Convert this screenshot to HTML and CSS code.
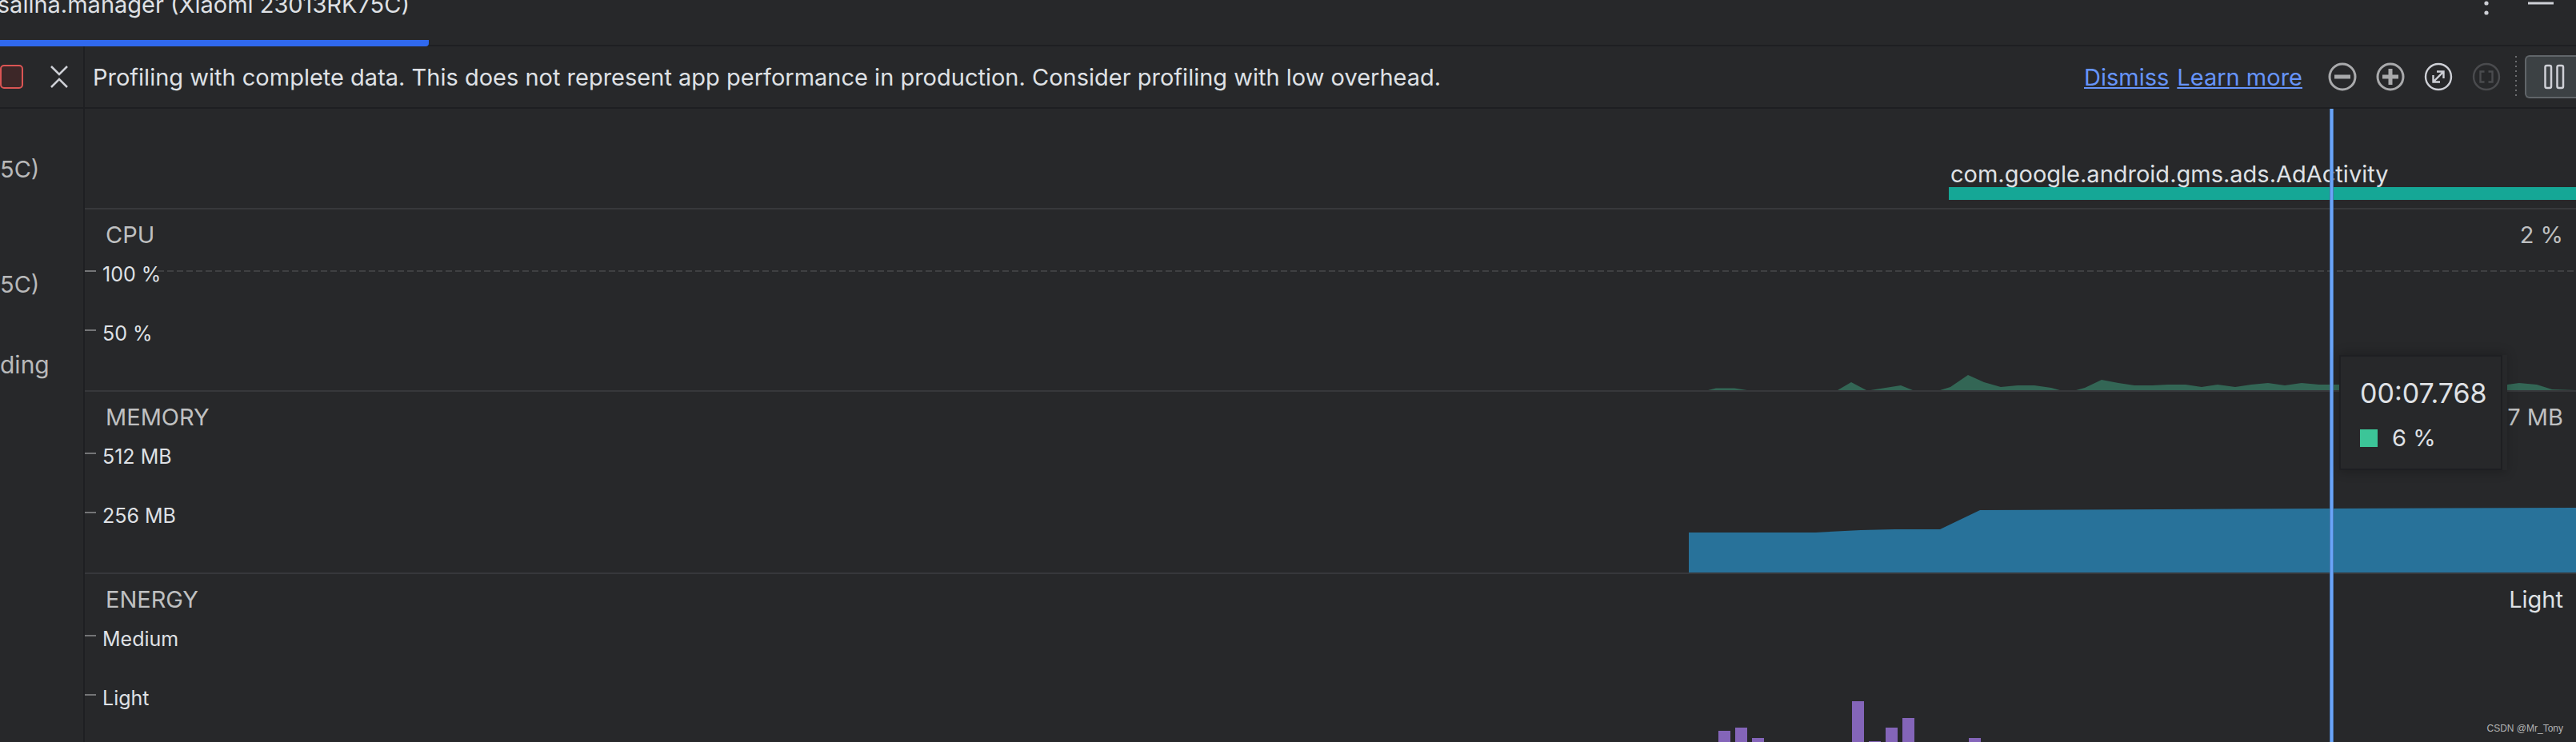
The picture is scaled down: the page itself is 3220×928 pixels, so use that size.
FILE: index.html
```html
<!DOCTYPE html>
<html lang="en">
<head>
  <meta charset="UTF-8">
  <title>Profiler</title>
  <link rel="stylesheet" href="styles.css">
</head>
<body>
  <header class="tabs">
    <button class="tab">salina.manager (Xiaomi 23013RK75C)</button>
    <div class="window-actions">
      <button class="icon-btn" aria-label="Options">
        <svg width="40" height="40" viewBox="0 0 40 40"><circle cx="20" cy="8" r="2.6"/><circle cx="20" cy="20" r="2.6"/><circle cx="20" cy="32" r="2.6"/></svg>
      </button>
      <button class="icon-btn" aria-label="Hide">
        <svg width="40" height="40" viewBox="0 0 40 40"><path d="M4 20H36" stroke-width="3"/></svg>
      </button>
    </div>
  </header>

  <div class="profiler">
    <aside class="sessions">
      <div class="sessions-bar">
        <button class="icon-btn" aria-label="Stop profiling">
          <svg width="30" height="40" viewBox="0 0 30 40"><rect class="stop" x="1" y="6" width="27" height="28" rx="4"/></svg>
        </button>
        <button class="icon-btn" aria-label="Collapse">
          <svg width="24" height="40" viewBox="0 0 24 40"><path d="M2 7L12 17L22 7M2 33L12 23L22 33" stroke-width="2.5"/></svg>
        </button>
      </div>
      <p class="session">5C)</p>
      <p class="session">5C)</p>
      <p class="recording">ding</p>
    </aside>

    <main class="stage">
      <div class="toolbar">
        <p class="notice">Profiling with complete data. This does not represent app performance in production. Consider profiling with low overhead.</p>
        <nav class="links">
          <a href="#">Dismiss</a>
          <a href="#">Learn more</a>
        </nav>
        <div class="zoom">
          <button class="icon-btn grey" aria-label="Zoom out">
            <svg width="36" height="36" viewBox="0 0 36 36"><circle class="ring" cx="18" cy="18" r="16" stroke-width="3"/><path d="M8 18H28" stroke-width="5"/></svg>
          </button>
          <button class="icon-btn grey" aria-label="Zoom in">
            <svg width="36" height="36" viewBox="0 0 36 36"><circle class="ring" cx="18" cy="18" r="16" stroke-width="3"/><path d="M8 18H28M18 8V28" stroke-width="5"/></svg>
          </button>
          <button class="icon-btn" aria-label="Reset zoom">
            <svg width="36" height="36" viewBox="0 0 36 36"><circle class="ring" cx="18" cy="18" r="16" stroke-width="2.4"/><path d="M12 24L24 12M16 11.5H24.5V20M11.5 16V24.5H20" stroke-width="2.4"/></svg>
          </button>
          <button class="icon-btn dim" aria-label="Zoom to selection" disabled>
            <svg width="36" height="36" viewBox="0 0 36 36"><circle class="ring" cx="18" cy="18" r="16" stroke-width="2.4"/><path d="M15.500 11.500H10.500V24.500H15.500M20.500 11.500H25.500V24.500H20.500" stroke-width="2.4"/></svg>
          </button>
        </div>
        <div class="separator"></div>
        <button class="pause" aria-label="Pause live">
          <svg width="26" height="32" viewBox="0 0 26 32"><rect x="1.5" y="2" width="7.5" height="28" rx="2"/><rect x="16.5" y="2" width="7.5" height="28" rx="2"/></svg>
        </button>
      </div>

      <section class="events">
        <div class="activity">com.google.android.gms.ads.AdActivity</div>
      </section>

      <section class="monitor">
        <svg class="chart" viewBox="0 0 3114 226" preserveAspectRatio="none">
          <path class="guide" d="M91 77H3114"/>
          <path class="cpu" d="M2029 226L2039 223.500H2062L2078 226H2191L2208 216L2227 226H2232L2270 220L2285 226H2319L2332 222L2354 207L2374 216L2395 222L2416 220H2437L2458 223L2469 226H2489L2500 223L2521 213L2542 217L2562 220H2584L2604 219H2626L2646 222L2666 219L2688 222L2708 219L2729 217L2750 220L2771 217L2793 219H3028L3043 217L3065 219L3084 225L3114 226Z"/>
        </svg>
        <div class="monitor-head"><h2>CPU</h2><span class="value">2 %</span></div>
        <div class="tick">100 %</div>
        <div class="tick">50 %</div>
      </section>

      <section class="monitor">
        <svg class="chart" viewBox="0 0 3114 226" preserveAspectRatio="none">
          <path class="memory" d="M2005 226V176H2163L2220 173L2262 172H2319L2369 148L2594 147L2806 146L3114 145V226Z"/>
        </svg>
        <div class="monitor-head"><h2>MEMORY</h2><span class="value">7 MB</span></div>
        <div class="tick">512 MB</div>
        <div class="tick">256 MB</div>
      </section>

      <section class="monitor">
        <svg class="chart" viewBox="0 0 3114 226" preserveAspectRatio="none">
          <path class="energy" d="M2042 226V196H2057V226ZM2063 226V192H2078V226ZM2084 226V205H2099V226ZM2209 226V159H2224V226ZM2230 226V209H2245V226ZM2251 226V192H2266V226ZM2272 226V180H2287V226ZM2355 226V205H2370V226Z"/>
        </svg>
        <div class="monitor-head"><h2>ENERGY</h2><span class="value bright">Light</span></div>
        <div class="tick">Medium</div>
        <div class="tick">Light</div>
      </section>

      <div class="cursor"></div>
      <div class="tooltip">
        <div class="time">00:07.768</div>
        <div class="legend"><span class="swatch"></span>6 %</div>
      </div>
    </main>
  </div>
  <div class="watermark">CSDN @Mr_Tony</div>
</body>
</html>
```
FILE: styles.css
```css
* {
  box-sizing: border-box;
}

body {
  margin: 0;
  height: 100vh;
  display: flex;
  flex-direction: column;
  overflow: hidden;
  position: relative;
  background: #27282a;
  color: #dfe1e5;
  font-family: Inter, "Liberation Sans", sans-serif;
  font-size: 29px;
  line-height: 36px;
}

h2, p {
  margin: 0;
  font-weight: 400;
  font-size: inherit;
}

button {
  padding: 0;
  border: none;
  background: none;
  color: inherit;
  font: inherit;
}

svg {
  display: block;
}

/* tab strip */
.tabs {
  display: flex;
  justify-content: space-between;
  height: 58px;
  flex: none;
  border-bottom: 2px solid #1e1f22;
}

.tab {
  width: 536px;
  height: 58px;
  padding: 0 24px 26px 0;
  display: flex;
  align-items: flex-end;
  justify-content: flex-end;
  white-space: nowrap;
  border-bottom: 8px solid #3069ee;
  border-radius: 0 0 4px 0;
}

.window-actions {
  display: flex;
  gap: 28px;
  padding-right: 24px;
  margin-top: -16px;
}

.icon-btn {
  height: 40px;
  display: flex;
  align-items: center;
  color: #ced0d6;
}

.icon-btn svg {
  fill: currentColor;
}

.icon-btn path, .icon-btn .ring {
  fill: none;
  stroke: currentColor;
}

.icon-btn .stop {
  fill: #3d2728;
  stroke: #db5554;
  stroke-width: 2;
}

.grey {
  color: #a9aaac;
}

.dim {
  color: #4a4b4e;
}

.profiler {
  flex: 1;
  min-height: 0;
  display: flex;
}

/* sessions list, scrolled off to the left */
.sessions {
  width: 106px;
  flex: none;
  border-right: 2px solid #1e1f22;
  color: #b8b9ba;
}

.sessions-bar {
  height: 78px;
  display: flex;
  align-items: center;
  justify-content: space-between;
  padding-right: 18px;
  border-bottom: 2px solid #1e1f22;
}

.session {
  padding: 58px 0 50px;
}

.recording {
  padding-top: 14px;
  font-size: 30px;
}

.stage {
  flex: 1;
  min-width: 0;
  position: relative;
}

.toolbar {
  height: 78px;
  display: flex;
  align-items: center;
  padding-left: 10px;
  white-space: nowrap;
  border-bottom: 2px solid #1e1f22;
}

.notice {
  flex: 1;
}

.notice, .links {
  padding-top: 2px;
}

.links {
  display: flex;
  gap: 10px;
}

.links a {
  color: #6694fa;
  text-underline-offset: 2px;
  text-decoration-thickness: 2px;
}

.zoom {
  display: flex;
  gap: 24px;
  padding: 0 18px 0 32px;
}

.separator {
  width: 2px;
  height: 52px;
  background: repeating-linear-gradient(#6b6c6f 0 2px, transparent 2px 6px);
}

.pause {
  width: 64px;
  height: 54px;
  margin-left: 10px;
  padding-left: 22px;
  background: #3c4144;
  border: 2px solid #606569;
  border-right: none;
  border-radius: 6px 0 0 6px;
}

.pause svg {
  fill: none;
  stroke: #ced0d6;
  stroke-width: 2.5;
}

/* activity lane */
.events {
  height: 126px;
  padding-top: 66px;
  border-bottom: 2px solid #37383b;
}

.activity {
  width: 784px;
  height: 48px;
  margin-left: auto;
  padding-left: 2px;
  line-height: 32px;
  border-bottom: 16px solid #15a796;
}

/* monitors */
.monitor {
  position: relative;
  height: 228px;
  border-bottom: 2px solid #37383b;
}

.monitor-head {
  display: flex;
  justify-content: space-between;
  padding: 14px 16px 11px 26px;
  color: #bfc0c1;
}

.monitor-head, .tick {
  position: relative;
}

.bright {
  color: #dfe1e5;
}

.tick {
  height: 74px;
  padding: 5px 0 0 22px;
  font-size: 25px;
  line-height: 30px;
}

.tick::before {
  content: "";
  position: absolute;
  left: 0;
  top: 15px;
  width: 14px;
  height: 2px;
  background: #747577;
}

.chart {
  position: absolute;
  inset: 0;
  width: 100%;
  height: 226px;
}

.guide {
  stroke: #3f4042;
  stroke-width: 2;
  stroke-dasharray: 8 4;
}

.cpu {
  fill: #336655;
}

.memory {
  fill: #28729a;
}

.energy {
  fill: #8465b9;
}

/* hover line and its tooltip */
.cursor {
  position: absolute;
  top: 78px;
  bottom: 0;
  right: 303px;
  width: 5px;
  background: #6ba5fa;
  border: solid #4a7ab8;
  border-width: 0 1px;
}

.tooltip {
  position: absolute;
  top: 386px;
  right: 92px;
  width: 204px;
  height: 144px;
  padding: 26px 0 0 24px;
  background: #27282a;
  border: 2px solid #1e1f22;
  box-shadow: 6px 0 0 #27282a, 3px 0 12px 3px rgba(0, 0, 0, 0.2);
}

.time {
  font-size: 34px;
  line-height: 40px;
}

.legend {
  display: flex;
  align-items: center;
  gap: 18px;
  margin-top: 18px;
}

.swatch {
  width: 22px;
  height: 22px;
  background: #3cc598;
}

.watermark {
  position: absolute;
  right: 16px;
  bottom: 8px;
  color: #b3b4b5;
  font: 12px/18px "Liberation Sans", sans-serif;
}
```
